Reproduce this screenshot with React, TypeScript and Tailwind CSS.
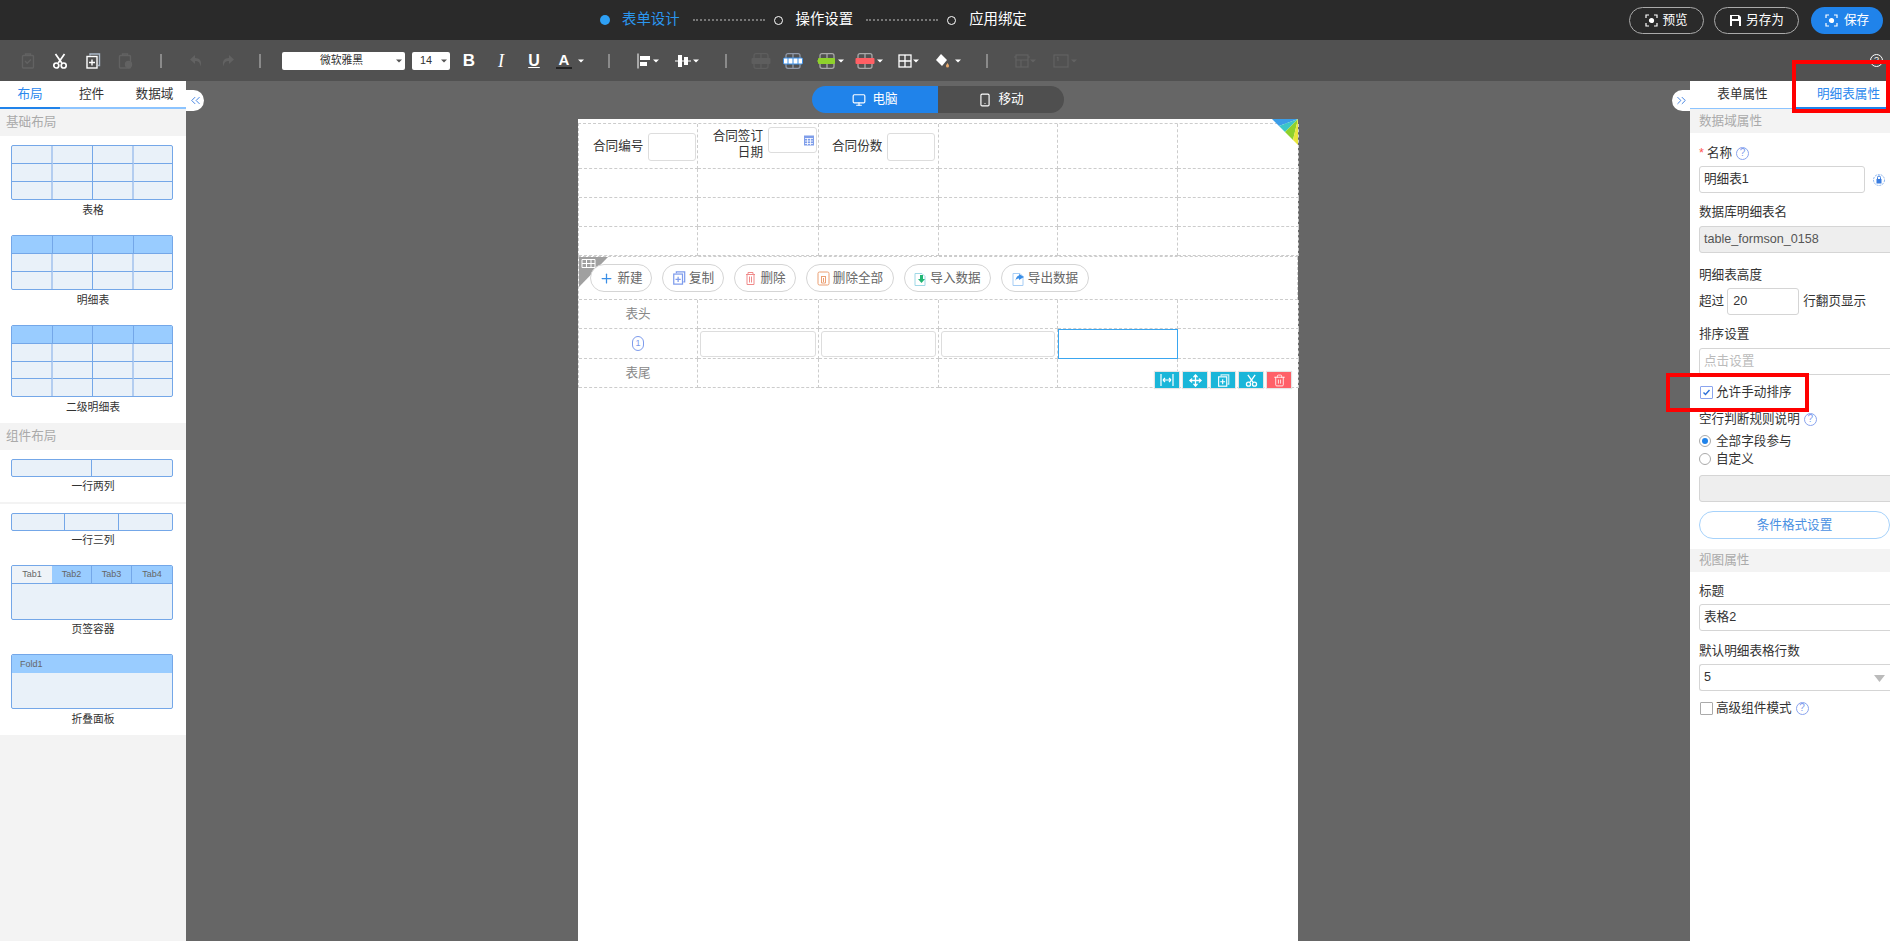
import { ChevronsLeft, ChevronsRight, Monitor, Move, Plus, Smartphone, Trash2 } from 'lucide-react';

const DIM = '#626262';

function Caret({ color = '#fff', className = '' }: { color?: string; className?: string }) {
  return (
    <svg width="6" height="4" viewBox="0 0 6 4" className={className}>
      <path d="M0 0.5h6L3 3.5z" fill={color} />
    </svg>
  );
}

function Sep({ className = '' }: { className?: string }) {
  return <div className={`h-[14px] w-[2px] bg-[#8a8a8a] ${className}`} />;
}

function Shears({ size = 16, width = 1.7 }: { size?: number; width?: number }) {
  return (
    <svg width={size} height={size} viewBox="0 0 16 16" fill="none" stroke="#fff" strokeWidth={width}>
      <path d="M3.500 1l6.300 9M12.500 1L6.200 10" />
      <circle cx="4.300" cy="12.500" r="2.500" />
      <circle cx="11.700" cy="12.500" r="2.500" />
    </svg>
  );
}

function CopyPlus({ color = '#fff', back = '#9ab', size = 16 }: { color?: string; back?: string; size?: number }) {
  return (
    <svg width={size} height={size} viewBox="0 0 16 16" fill="none">
      <path d="M5 2.500V1h9.500v11.500H13" stroke={back} strokeWidth="1.400" />
      <rect x="2" y="3.500" width="10" height="11.500" stroke={color} strokeWidth="1.400" />
      <path d="M7 6.500v6M4 9.500h6" stroke={color} strokeWidth="1.400" />
    </svg>
  );
}

function DimClip({ check }: { check?: boolean }) {
  return (
    <svg width="16" height="16" viewBox="0 0 16 16" fill="none" stroke={DIM} strokeWidth="1.400">
      <rect x="2.500" y="2.500" width="11" height="12.500" rx="1" />
      <path d="M5.500 2.500V1h5v1.500" />
      {check ? <path d="M5 8l2.200 2.200L11 6.500" /> : <circle cx="11.500" cy="11.500" r="3" fill={DIM} />}
    </svg>
  );
}

function Arrow({ flip }: { flip?: boolean }) {
  return (
    <svg width="16" height="16" viewBox="0 0 16 16" className={flip ? '-scale-x-100' : ''}>
      <path d="M7 2L2 6.500 7 11V8c3 0 5 1 5.500 5.500C14.500 8 11.500 5 7 5z" fill={DIM} />
    </svg>
  );
}

function RowIcon({ fill, stroke, arrow, edge }: { fill: string; stroke: string; arrow?: string; edge?: string }) {
  return (
    <svg width="20" height="16" viewBox="0 0 20 16" fill="none">
      <rect x="3" y="0.700" width="14" height="14.600" rx="2" stroke={stroke} strokeWidth="1.300" />
      <path d="M10 1v14" stroke={stroke} strokeWidth="1.300" />
      <rect x={arrow ? 1 : 0.500} y="5" width={arrow ? 17 : 19} height="6" rx="1" fill={fill} stroke={edge} />
      {arrow ? <path d="M0 8l3-3v6z" fill={arrow} /> : null}
      {edge ? <path d="M5 5v6M10 5v6M15 5v6" stroke={edge} strokeWidth="1" /> : null}
    </svg>
  );
}

function Toolbar() {
  return (
    <div className="flex h-[41px] shrink-0 items-center bg-[#515151] pl-[20px]">
      <DimClip check />
      <div className="ml-[16px]"><Shears /></div>
      <div className="ml-[17px]"><CopyPlus color="#fff" back="#aab8c8" /></div>
      <div className="ml-[16px]"><DimClip /></div>
      <Sep className="ml-[27px]" />
      <div className="ml-[26px]"><Arrow /></div>
      <div className="ml-[16px]"><Arrow flip /></div>
      <Sep className="ml-[23px]" />
      <div className="relative ml-[21px] flex h-[18px] w-[123px] items-center justify-center rounded-[2px] bg-white pr-[4px] text-[10.800px] text-[#333]">
        微软雅黑
        <Caret color="#555" className="absolute right-[3px] top-[7px]" />
      </div>
      <div className="relative ml-[7px] flex h-[18px] w-[38px] items-center rounded-[2px] bg-white pl-[8px] text-[10.800px] text-[#333]">
        14
        <Caret color="#555" className="absolute right-[3px] top-[7px]" />
      </div>
      <span className="ml-[11px] w-[16px] text-center text-[17px] font-bold leading-none text-white">B</span>
      <span className="ml-[16px] w-[16px] text-center font-['Liberation_Serif',serif] text-[18px] italic leading-none text-white">I</span>
      <span className="ml-[17px] w-[16px] text-center text-[16px] font-bold leading-none text-white underline">U</span>
      <span className="ml-[14px] w-[16px] border-b-2 border-[#222] text-center text-[15px] font-bold leading-[15px] text-white">A</span>
      <Caret className="ml-[6px]" />
      <Sep className="ml-[24px]" />
      <svg width="16" height="16" viewBox="0 0 16 16" className="ml-[27px]">
        <path d="M1 0.500v15" stroke="#fff" />
        <rect x="3" y="3" width="10" height="4" fill="#fff" />
        <rect x="3" y="9" width="7" height="4" fill="#fff" />
      </svg>
      <Caret />
      <svg width="16" height="16" viewBox="0 0 16 16" className="ml-[16px]">
        <path d="M0 8h16" stroke="#fff" />
        <rect x="3" y="2" width="4" height="12" fill="#fff" />
        <rect x="9" y="4" width="4" height="8" fill="#fff" />
      </svg>
      <Caret className="ml-[2px]" />
      <Sep className="ml-[26px]" />
      <div className="ml-[24px]"><RowIcon fill="#5e5e5e" stroke="#5e5e5e" /></div>
      <div className="ml-[12px]"><RowIcon fill="#fff" stroke="#8f98a8" edge="#3a8ee6" /></div>
      <div className="ml-[14px]"><RowIcon fill="#8fd12c" stroke="#a8a8a8" arrow="#8fd12c" /></div>
      <Caret className="ml-[1px]" />
      <div className="ml-[11px]"><RowIcon fill="#ff5f64" stroke="#a8a8a8" /></div>
      <Caret className="ml-[2px]" />
      <svg width="14" height="14" viewBox="0 0 14 14" fill="none" stroke="#fff" strokeWidth="1.300" className="ml-[15px] mr-[1px]">
        <rect x="1" y="1" width="12" height="12" />
        <path d="M7 1v12M1 7h12" />
      </svg>
      <Caret />
      <svg width="16" height="16" viewBox="0 0 16 16" className="ml-[15px]">
        <path d="M7 1l6 6-5 6-6-6z" fill="#fff" />
        <path d="M13.500 10c1 1.500 1.500 2 1.500 3a1.500 1.500 0 0 1-3 0c0-1 .5-1.500 1.500-3z" fill="#e9a96b" />
      </svg>
      <Caret className="ml-[5px]" />
      <Sep className="ml-[25px]" />
      <svg width="16" height="16" viewBox="0 0 16 16" fill="none" stroke={DIM} strokeWidth="1.200" className="ml-[26px]">
        <rect x="2" y="2" width="12" height="12" />
        <path d="M2 7h12M7 7v7M0 4h2M14 4h2" />
      </svg>
      <Caret color={DIM} />
      <svg width="16" height="16" viewBox="0 0 16 16" fill="none" stroke={DIM} strokeWidth="1.200" className="ml-[17px]">
        <rect x="1" y="2" width="14" height="12" />
        <path d="M5 4v4M4 5l1-1" />
      </svg>
      <Caret color={DIM} className="ml-[2px]" />
      <div className="ml-auto mr-[7px] flex h-[13px] w-[13px] items-center justify-center rounded-full border border-white text-[9px] leading-none text-white">?</div>
    </div>
  );
}

function TopBar() {
  return (
    <div className="flex h-[40px] shrink-0 items-center bg-[#2a2a2a] pl-[600px] text-[14.400px] text-white">
      <div className="h-[10px] w-[10px] rounded-full bg-[#2ea0f5]" />
      <span className="ml-[12px] text-[#2b96ee]">表单设计</span>
      <div className="ml-[13px] w-[72px] border-t-2 border-dotted border-[#777]" />
      <div className="ml-[9px] h-[9px] w-[9px] rounded-full border border-white" />
      <span className="ml-[13px]">操作设置</span>
      <div className="ml-[13px] w-[72px] border-t-2 border-dotted border-[#777]" />
      <div className="ml-[9px] h-[9px] w-[9px] rounded-full border border-white" />
      <span className="ml-[13px]">应用绑定</span>
      <div className="ml-auto mr-[7px] flex items-center text-[12.600px]">
        <div className="flex h-[27px] w-[75px] items-center justify-center gap-[4px] rounded-full border border-[#aaa]">
          <svg width="13" height="13" viewBox="0 0 13 13" fill="none" stroke="#fff" strokeWidth="1.200">
            <path d="M1 4V1h3M9 1h3v3M12 9v3H9M4 12H1V9" />
            <circle cx="6.500" cy="6.500" r="2" fill="#fff" />
          </svg>
          预览
        </div>
        <div className="ml-[10px] flex h-[27px] w-[85px] items-center justify-center gap-[4px] rounded-full border border-[#aaa]">
          <svg width="13" height="13" viewBox="0 0 13 13">
            <path d="M1 1h9l2 2v9H1z" fill="#fff" />
            <rect x="3" y="2" width="6" height="3" fill="#2a2a2a" />
            <rect x="3" y="7" width="7" height="5" fill="#2a2a2a" />
          </svg>
          另存为
        </div>
        <div className="ml-[12px] flex h-[27px] w-[72px] items-center justify-center gap-[6px] rounded-full bg-[#2083ea]">
          <svg width="13" height="13" viewBox="0 0 13 13" fill="none" stroke="#fff" strokeWidth="1.200">
            <path d="M1 4V1h3M9 1h3v3M12 9v3H9M4 12H1V9" />
            <circle cx="6.500" cy="6.500" r="2" fill="#fff" />
          </svg>
          保存
        </div>
      </div>
    </div>
  );
}

function Thumb({ cols, rows, head, h }: { cols: number; rows: number; head?: boolean; h: string }) {
  const cells = Array.from({ length: cols * rows }, (_, i) => i);
  return (
    <div
      className={`mx-[11px] grid w-[162px] overflow-hidden rounded-[2px] border border-[#74a7e8] bg-[#e9f1f9] ${h} ${
        cols === 4 ? 'grid-cols-[41px_40px_41px_1fr]' : cols === 3 ? 'grid-cols-3' : 'grid-cols-2'
      }`}
    >
      {cells.map((i) => {
        const col = i % cols;
        const lastCol = col === cols - 1;
        const lastRow = i >= cols * (rows - 1);
        const soft = cols === 4 && (col === 0 || col === 2);
        const isHead = head && i < cols;
        return (
          <div
            key={i}
            className={`${lastCol ? '' : soft && !isHead ? 'border-r-2 border-r-[#b3cdf0]' : 'border-r border-r-[#74a7e8]'} ${
              lastRow ? '' : 'border-b border-b-[#74a7e8]'
            } ${isHead ? 'bg-[#99ccff]' : ''}`}
          />
        );
      })}
    </div>
  );
}

function ThumbLabel({ children }: { children: string }) {
  return <div className="h-[16px] text-center text-[10.800px] leading-[16px] text-[#333]">{children}</div>;
}

function SectionHead({ children, h }: { children: string; h: string }) {
  return <div className={`flex items-center bg-[#f3f3f3] pl-[6px] text-[12.600px] text-[#aaa] ${h}`}>{children}</div>;
}

function LeftPanel() {
  return (
    <div className="flex w-[186px] shrink-0 flex-col bg-[#f3f3f3]">
      <div className="flex h-[28px] shrink-0 border-b-2 border-[#8cc4ff] bg-white text-[12.600px] text-[#333]">
        <div className="-mb-[2px] flex w-[60px] items-center justify-center border-b-2 border-[#2083ea] text-[#2b88ee]">布局</div>
        <div className="flex w-[63px] items-center justify-center">控件</div>
        <div className="flex w-[63px] items-center justify-center">数据域</div>
      </div>
      <SectionHead h="h-[27px]">基础布局</SectionHead>
      <div className="bg-white pb-[5px] pt-[9px]">
        <Thumb cols={4} rows={3} h="h-[55px]" />
        <div className="mt-[2px]"><ThumbLabel>表格</ThumbLabel></div>
        <div className="mt-[17px]"><Thumb cols={4} rows={3} head h="h-[55px]" /></div>
        <div className="mt-[2px]"><ThumbLabel>明细表</ThumbLabel></div>
        <div className="mt-[17px]"><Thumb cols={4} rows={4} head h="h-[72px]" /></div>
        <div className="mt-[2px]"><ThumbLabel>二级明细表</ThumbLabel></div>
        <div className="h-[3px]" />
      </div>
      <SectionHead h="h-[27px]">组件布局</SectionHead>
      <div className="bg-white pb-[8px] pt-[9px]">
        <Thumb cols={2} rows={1} h="h-[18px]" />
        <div className="mt-[1px]"><ThumbLabel>一行两列</ThumbLabel></div>
      </div>
      <div className="mt-[2px] bg-white pb-[8px] pt-[9px]">
        <Thumb cols={3} rows={1} h="h-[18px]" />
        <div className="mt-[1px]"><ThumbLabel>一行三列</ThumbLabel></div>
        <div className="mx-[11px] mt-[17px] h-[55px] w-[162px] overflow-hidden rounded-[2px] border border-[#74a7e8] bg-[#e9f1f9]">
          <div className="grid h-[18px] grid-cols-4 border-b border-[#74a7e8] bg-[#99ccff] text-center text-[9px] leading-[17px] text-[#666]">
            <div className="bg-[#eef3f8]">Tab1</div>
            <div className="border-r border-[#74a7e8]">Tab2</div>
            <div className="border-r border-[#74a7e8]">Tab3</div>
            <div>Tab4</div>
          </div>
        </div>
        <div className="mt-[1px]"><ThumbLabel>页签容器</ThumbLabel></div>
        <div className="mx-[11px] mt-[17px] h-[55px] w-[162px] overflow-hidden rounded-[2px] border border-[#74a7e8] bg-[#e9f1f9]">
          <div className="h-[18px] bg-[#99ccff] pl-[8px] text-[9px] leading-[18px] text-[#666]">Fold1</div>
        </div>
        <div className="mt-[2px]"><ThumbLabel>折叠面板</ThumbLabel></div>
      </div>
    </div>
  );
}

function Cell({ h, children, className = '' }: { h: string; children?: React.ReactNode; className?: string }) {
  return <div className={`border-b border-r border-dashed border-[#ccc] ${h} ${className}`}>{children}</div>;
}

const COLS = 'grid grid-cols-[119px_121px_120px_119px_120px_121px]';

function FieldBox({ className }: { className: string }) {
  return <div className={`rounded-[3px] border border-[#ddd] bg-white ${className}`} />;
}

function PillButton({ icon, label, w }: { icon: React.ReactNode; label: string; w: string }) {
  return (
    <div className={`relative flex h-[28px] items-center justify-center gap-[3px] rounded-full border border-[#d5d5d5] bg-white text-[12.600px] text-[#666] ${w}`}>
      {icon}
      {label}
    </div>
  );
}

function DocIcon({ arrow, color }: { arrow: string; color: string }) {
  return (
    <svg width="13" height="15" viewBox="0 0 13 15" fill="none">
      <path d="M1 2.500h7l3 3v9H1z" stroke={color} strokeWidth="1" />
      <path d={arrow} fill={color === '#9fd8e6' ? '#22b573' : '#3b8fe8'} />
    </svg>
  );
}

function BinIcon({ color, box }: { color: string; box?: boolean }) {
  return (
    <svg width="13" height="15" viewBox="0 0 13 15" fill="none" stroke={color} strokeWidth="1">
      {box ? <rect x="1" y="1" width="11" height="13" rx="1.500" /> : null}
      <path d={box ? 'M4 5.500h5M4.500 6v6h4V6M6.500 7v4' : 'M2 3.500h9M4 3V1.500h5V3M3 4v9.500h7V4M5.500 5.500v6M7.500 5.500v6'} />
    </svg>
  );
}

function ActionTile({ children, red }: { children: React.ReactNode; red?: boolean }) {
  return (
    <div className={`flex h-[16px] w-[24px] items-center justify-center shadow-[0_0_1px_1px_#e5e5e5] ${red ? 'bg-[#ff6068]' : 'bg-[#1ab6d9]'}`}>
      {children}
    </div>
  );
}

function FormPage() {
  return (
    <div className="relative mt-[6px] w-[720px] flex-1 bg-white pt-[4px] text-[12.600px] text-[#333]">
      {/* corner ribbon */}
      <svg width="26" height="26" viewBox="0 0 26 26" className="absolute right-0 top-0">
        <path d="M26 0H0l7 7z" fill="#3b9de8" />
        <path d="M26 0L7 7l6 6z" fill="#3cc6c8" />
        <path d="M26 0L13 13l8 8z" fill="#8fd12c" />
        <path d="M26 0L21 21l5 5z" fill="#e8e63c" />
      </svg>
      <div className={`${COLS} border-l border-t border-dashed border-[#ccc]`}>
        <Cell h="h-[45px]" className="flex items-center pl-[14px]">
          <span className="shrink-0 whitespace-nowrap">合同编号</span>
          <FieldBox className="ml-[5px] mt-[1px] h-[28px] w-[48px] shrink-0" />
        </Cell>
        <Cell h="h-[45px]" className="flex pl-[14px]">
          <div className="mt-[4px] w-[51px] shrink-0 whitespace-nowrap text-right leading-[16px]">
            合同签订
            <br />
            日期
          </div>
          <div className="relative ml-[5px] mt-[3px] h-[26px] w-[49px] shrink-0 rounded-[3px] border border-[#ddd]">
            <svg width="10" height="12" viewBox="0 0 10 12" className="absolute right-[2px] top-[6px]">
              <rect x="0" y="1.500" width="10" height="10" fill="#7f9eea" />
              <path d="M1 4.500h8M1 7h8M1 9.500h8M3.500 4v7M6.500 4v7" stroke="#fff" strokeWidth="0.800" />
            </svg>
          </div>
        </Cell>
        <Cell h="h-[45px]" className="flex items-center pl-[13px]">
          <span className="shrink-0 whitespace-nowrap">合同份数</span>
          <FieldBox className="ml-[5px] mt-[1px] h-[28px] w-[48px] shrink-0" />
        </Cell>
        <Cell h="h-[45px]" />
        <Cell h="h-[45px]" />
        <Cell h="h-[45px]" />
        {Array.from({ length: 18 }, (_, i) => (
          <Cell key={i} h="h-[29px]" />
        ))}
      </div>
      <div className="relative border-l border-t border-dashed border-[#ccc]">
        <svg width="29" height="30" viewBox="0 0 29 30" className="absolute left-0 top-0">
          <path d="M0 0h29L0 30z" fill="#a0a0a0" />
          <path d="M3 2.500h13v8H3zM3 6.500h13M7.500 2.500v8M12 2.500v8" fill="none" stroke="#fff" strokeWidth="1" />
        </svg>
        <div className="flex h-[43px] items-center gap-[10px] border-b border-r border-dashed border-[#ccc] pl-[11px]">
          <PillButton w="w-[62px]" icon={<Plus size={15} color="#3a8ee6" />} label="新建" />
          <PillButton w="w-[62px]" icon={<CopyPlus color="#7d9bec" back="#7d9bec" size={14} />} label="复制" />
          <PillButton w="w-[62px]" icon={<BinIcon color="#f08a8a" />} label="删除" />
          <PillButton w="w-[88px]" icon={<BinIcon color="#eb9f72" box />} label="删除全部" />
          <PillButton w="w-[87px]" icon={<DocIcon color="#9fd8e6" arrow="M6 4h3v4h2l-3.500 4L4 8h2z" />} label="导入数据" />
          <PillButton w="w-[88px]" icon={<DocIcon color="#a6cdf5" arrow="M7 3l5 3-5 3V7.500C5 7.500 4 8.500 3.500 10 3.500 7 5 5 7 4.500z" />} label="导出数据" />
        </div>
        <div className={COLS}>
          <Cell h="h-[29px]" className="flex items-center justify-center text-[#888]">表头</Cell>
          {Array.from({ length: 5 }, (_, i) => (
            <Cell key={i} h="h-[29px]" />
          ))}
          <Cell h="h-[30px]" className="flex items-center justify-center">
            <div className="flex h-[15px] w-[12px] items-center justify-center rounded-full border border-[#7d9bec] text-[9px] leading-none text-[#7d9bec]">1</div>
          </Cell>
          {[0, 1, 2].map((i) => (
            <Cell key={i} h="h-[30px]" className="px-[2px] pt-[2px]">
              <FieldBox className="h-[26px] w-full" />
            </Cell>
          ))}
          <div className="h-[30px] border border-[#3aa6f0]" />
          <Cell h="h-[30px]" />
          <Cell h="h-[29px]" className="flex items-center justify-center text-[#888]">表尾</Cell>
          {Array.from({ length: 5 }, (_, i) => (
            <Cell key={i} h="h-[29px]" />
          ))}
        </div>
        {/* tools for the selected cell */}
        <div className="absolute right-[7px] top-[115px] flex gap-[4px]">
          <ActionTile>
            <svg width="14" height="12" viewBox="0 0 14 12" fill="none" stroke="#fff" strokeWidth="1.200">
              <path d="M1 0v12M13 0v12M3 6h8M3 6l2-2M3 6l2 2M11 6L9 4M11 6L9 8" />
            </svg>
          </ActionTile>
          <ActionTile><Move size={13} color="#fff" strokeWidth={2.500} /></ActionTile>
          <ActionTile><CopyPlus color="#fff" back="#d5f2f8" size={13} /></ActionTile>
          <ActionTile><Shears size={13} width={1.600} /></ActionTile>
          <ActionTile red><Trash2 size={13} color="#fff" strokeWidth={1.500} /></ActionTile>
        </div>
      </div>
    </div>
  );
}

function CollapseTab({ right, className }: { right?: boolean; className: string }) {
  return (
    <div className={`absolute top-[9px] flex h-[21px] w-[18px] items-center justify-center bg-white ${className}`}>
      {right ? <ChevronsRight size={15} color="#3a7de0" strokeWidth={1.500} /> : <ChevronsLeft size={15} color="#3a7de0" strokeWidth={1.500} />}
    </div>
  );
}

function Help() {
  return (
    <span className="ml-[4px] inline-flex h-[13px] w-[13px] items-center justify-center rounded-full border border-[#8aa4ee] text-[10px] leading-none text-[#7d9bec]">?</span>
  );
}

function Label({ children, className }: { children: React.ReactNode; className: string }) {
  return <div className={`flex h-[18px] items-center leading-[18px] ${className}`}>{children}</div>;
}

function TextBox({ value, className, disabled }: { value?: string; className: string; disabled?: boolean }) {
  return (
    <div className={`flex h-[27px] items-center rounded-[3px] border border-[#d5d5d5] pl-[4px] ${disabled ? 'bg-[#eee] text-[#555]' : 'bg-white'} ${className}`}>
      {value}
    </div>
  );
}

function RightPanel() {
  return (
    <div className="flex w-[200px] shrink-0 flex-col overflow-hidden bg-white text-[12.600px] text-[#333]">
      <div className="flex h-[28px] shrink-0 border-b border-[#8cc4ff]">
        <div className="flex w-[105px] items-center justify-center">表单属性</div>
        <div className="-mb-px flex w-[95px] items-center justify-center border-b-2 border-[#2083ea] pl-[12px] text-[#2b88ee]">明细表属性</div>
      </div>
      <div className="flex h-[24px] shrink-0 items-center bg-[#f3f3f3] pl-[9px] text-[#aaa]">数据域属性</div>
      <div className="w-[209px] pl-[9px]">
        <Label className="mt-[11px]">
          <span className="mr-[3px] text-[#f55]">*</span>名称<Help />
        </Label>
        <div className="mt-[4px] flex items-center">
          <TextBox value="明细表1" className="w-[166px]" />
          <svg width="12" height="14" viewBox="0 0 12 14" className="ml-[8px]">
            <circle cx="6" cy="7" r="5.500" fill="none" stroke="#8ab4ee" strokeDasharray="2 1" />
            <rect x="3.500" y="6" width="5" height="4.500" fill="#3a7de0" />
            <path d="M4.500 6V4.500a1.500 1.500 0 0 1 3 0V6" fill="none" stroke="#3a7de0" />
          </svg>
        </div>
        <Label className="mt-[10px]">数据库明细表名</Label>
        <TextBox value="table_formson_0158" disabled className="mt-[5px] w-[200px]" />
        <Label className="mt-[13px]">明细表高度</Label>
        <div className="mt-[4px] flex items-center">
          超过
          <TextBox value="20" className="ml-[3px] w-[72px] pl-[5px]" />
          <span className="ml-[4px]">行翻页显示</span>
        </div>
        <Label className="mt-[10px]">排序设置</Label>
        <div className="mt-[5px] flex h-[27px] w-[200px] items-center rounded-[3px] border border-[#d5d5d5] pl-[4px] text-[#bbb]">点击设置</div>
        <div className="mt-[8px] flex h-[18px] items-center pl-[1px]">
          <div className="flex h-[13px] w-[13px] items-center justify-center rounded-[1px] border border-[#8aa4ee]">
            <svg width="9" height="9" viewBox="0 0 9 9" fill="none" stroke="#2b6fd8" strokeWidth="1.400">
              <path d="M1.500 4.500l2 2 4-4.500" />
            </svg>
          </div>
          <span className="ml-[3px]">允许手动排序</span>
        </div>
        <Label className="mt-[9px]">空行判断规则说明<Help /></Label>
        <div className="mt-[4px] flex h-[18px] items-center">
          <div className="flex h-[12px] w-[12px] items-center justify-center rounded-full border border-[#aaa]">
            <div className="h-[6px] w-[6px] rounded-full bg-[#2083ea]" />
          </div>
          <span className="ml-[5px]">全部字段参与</span>
        </div>
        <div className="flex h-[18px] items-center">
          <div className="h-[12px] w-[12px] rounded-full border border-[#aaa]" />
          <span className="ml-[5px]">自定义</span>
        </div>
        <TextBox disabled className="mt-[7px] w-[200px]" />
        <div className="mt-[9px] flex h-[28px] w-[191px] items-center justify-center rounded-full border border-[#a6d2fb] text-[#4a90e2]">条件格式设置</div>
      </div>
      <div className="mt-[10px] flex h-[23px] shrink-0 items-center bg-[#f3f3f3] pl-[9px] text-[#aaa]">视图属性</div>
      <div className="w-[209px] pl-[9px]">
        <Label className="mt-[10px]">标题</Label>
        <TextBox value="表格2" className="mt-[4px] w-[200px]" />
        <Label className="mt-[11px]">默认明细表格行数</Label>
        <div className="relative mt-[4px] flex h-[27px] w-[191px] items-center rounded-l-[3px] border border-r-0 border-[#d5d5d5] pl-[4px]">
          5
          <svg width="11" height="7" viewBox="0 0 11 7" className="absolute right-[5px] top-[10px]">
            <path d="M0 0h11L5.500 7z" fill="#bbb" />
          </svg>
        </div>
        <div className="mt-[8px] flex h-[18px] items-center pl-[1px]">
          <div className="h-[13px] w-[13px] rounded-[1px] border border-[#aaa]" />
          <span className="ml-[3px]">高级组件模式</span>
          <Help />
        </div>
      </div>
    </div>
  );
}

export default function App() {
  return (
    <div className="relative flex h-screen w-full flex-col overflow-hidden bg-[#666] font-['Liberation_Sans','Noto_Sans_CJK_SC',sans-serif]">
      <TopBar />
      <Toolbar />
      <div className="flex min-h-0 flex-1">
        <LeftPanel />
        <div className="relative flex min-w-0 flex-1 flex-col items-center bg-[#666]">
          <CollapseTab className="left-0 rounded-r-full" />
          <CollapseTab right className="right-0 rounded-l-full" />
          <div className="mt-[5px] flex h-[27px] w-[252px] overflow-hidden rounded-full text-[12.600px] text-white">
            <div className="flex w-[126px] items-center justify-center gap-[6px] bg-[#2083ea]">
              <Monitor size={14} />
              电脑
            </div>
            <div className="flex w-[126px] items-center justify-center gap-[6px] bg-[#4f4f4f]">
              <Smartphone size={14} />
              移动
            </div>
          </div>
          <FormPage />
        </div>
        <RightPanel />
      </div>
      {/* red annotation boxes drawn over the capture */}
      <div className="absolute left-[1792px] top-[60px] h-[53px] w-[98px] border-4 border-[#ff0000]" />
      <div className="absolute left-[1666px] top-[373px] h-[39px] w-[143px] border-4 border-[#ff0000]" />
    </div>
  );
}
